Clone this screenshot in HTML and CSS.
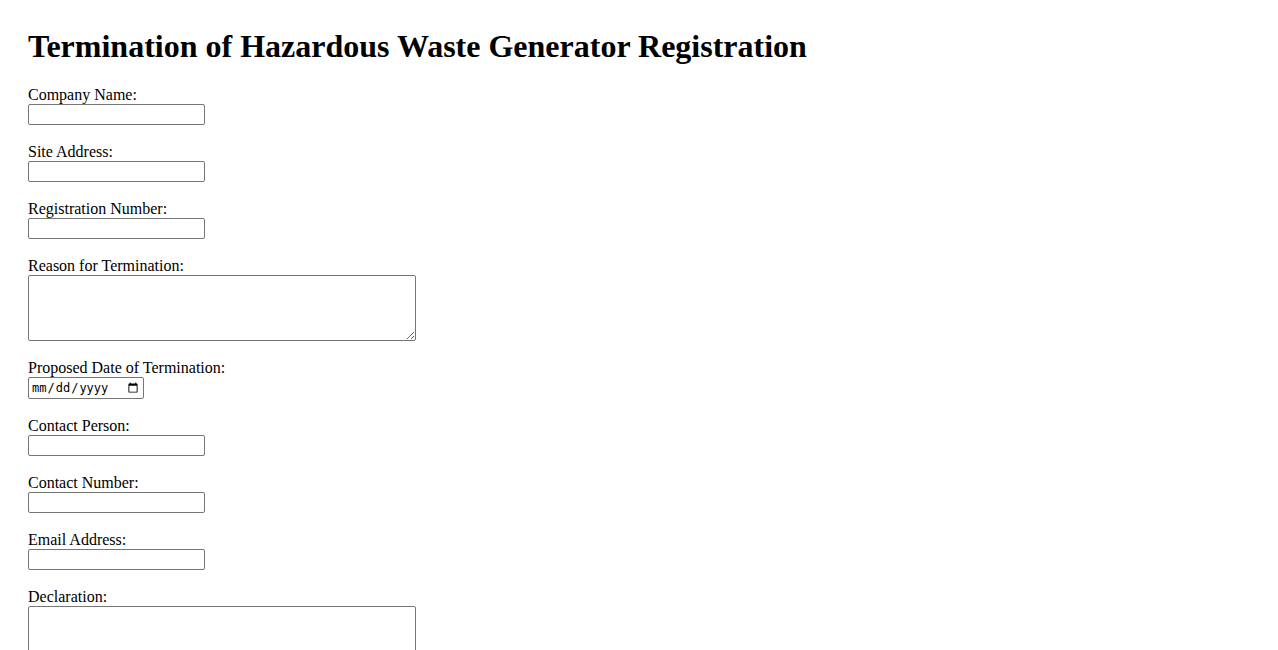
FILE: index.html
```html
<!DOCTYPE html>
<html>
<head>
<meta charset="utf-8">
<title>Termination of Hazardous Waste Generator Registration</title>
<link rel="stylesheet" href="styles.css">
</head>
<body>
<h1 class="title">Termination of Hazardous Waste Generator Registration</h1>
<form class="form">
  <div class="field"><label class="label" for="company">Company Name:</label><input class="text" type="text" id="company"></div>
  <div class="field"><label class="label" for="site">Site Address:</label><input class="text" type="text" id="site"></div>
  <div class="field"><label class="label" for="reg">Registration Number:</label><input class="text" type="text" id="reg"></div>
  <div class="field"><label class="label" for="reason">Reason for Termination:</label><textarea class="area" id="reason"></textarea></div>
  <div class="field"><label class="label" for="date">Proposed Date of Termination:</label><input class="date" type="date" id="date"></div>
  <div class="field"><label class="label" for="person">Contact Person:</label><input class="text" type="text" id="person"></div>
  <div class="field"><label class="label" for="phone">Contact Number:</label><input class="text" type="tel" id="phone"></div>
  <div class="field"><label class="label" for="email">Email Address:</label><input class="text" type="email" id="email"></div>
  <div class="field"><label class="label" for="decl">Declaration:</label><textarea class="area" id="decl"></textarea></div>
</form>
</body>
</html>
```
FILE: styles.css
```css
html, body {
  background: #fff;
}
body {
  margin: 0;
  padding: 28px;
  font-family: "Liberation Serif", "Times New Roman", serif;
  font-size: 16px;
  color: #000;
}
.title {
  margin: 0 0 21px;
  font-size: 32px;
  line-height: 37px;
  font-weight: bold;
}
.form {
  margin: 0;
}
.field {
  margin-bottom: 18px;
}
.label {
  display: block;
  line-height: 18px;
}
.text, .date, .area {
  display: block;
  box-sizing: border-box;
  margin: 0;
  border: 1px solid #767676;
  border-radius: 2px;
  background: #fff;
}
.text {
  width: 177px;
  height: 21px;
  padding: 1px 2px;
}
.date {
  width: 116px;
  height: 22px;
  padding: 1px 2px;
  font-family: "DejaVu Sans Mono", "Liberation Mono", monospace;
  font-size: 12px;
}
.area {
  width: 388px;
  height: 66px;
  padding: 2px;
  resize: both;
}
```
